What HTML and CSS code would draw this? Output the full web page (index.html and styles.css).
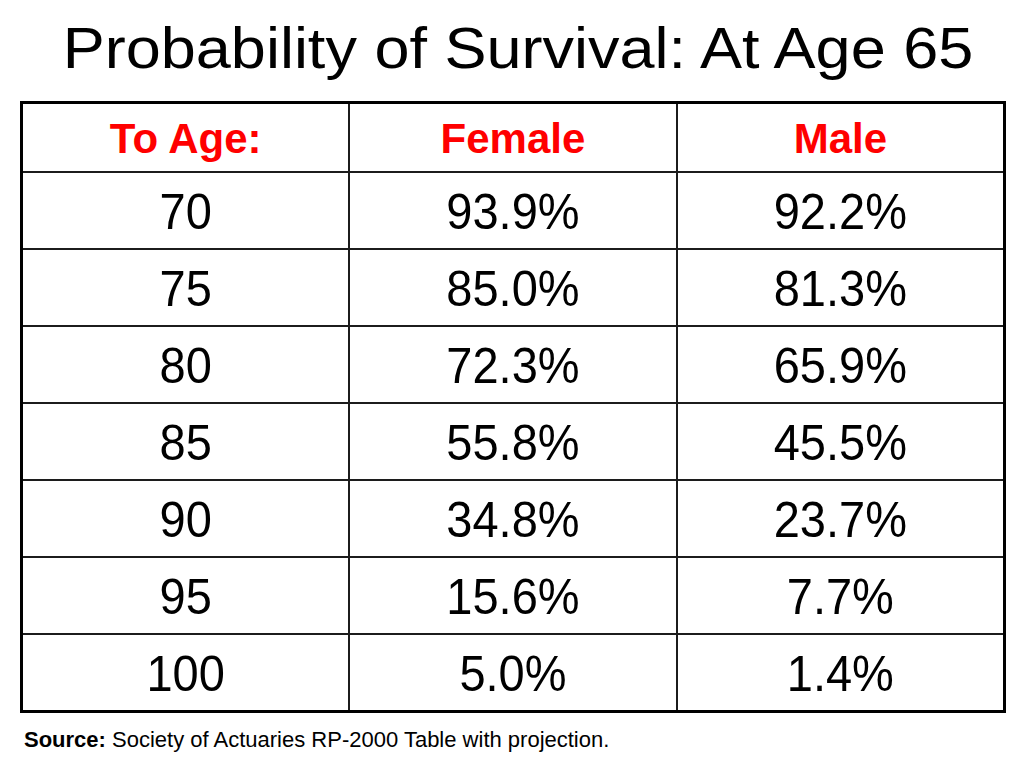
FILE: index.html
```html
<!DOCTYPE html>
<html lang="en">
<head>
<meta charset="utf-8">
<title>Probability of Survival: At Age 65</title>
<link rel="stylesheet" href="styles.css">
</head>
<body>
<main class="slide">
  <h1 class="title">Probability of Survival: At Age 65</h1>
  <div class="table" role="table">
    <div class="cell head" role="columnheader"><span>To Age:</span></div>
    <div class="cell head" role="columnheader"><span>Female</span></div>
    <div class="cell head" role="columnheader"><span>Male</span></div>

    <div class="cell"><span>70</span></div><div class="cell"><span>93.9%</span></div><div class="cell"><span>92.2%</span></div>
    <div class="cell"><span>75</span></div><div class="cell"><span>85.0%</span></div><div class="cell"><span>81.3%</span></div>
    <div class="cell"><span>80</span></div><div class="cell"><span>72.3%</span></div><div class="cell"><span>65.9%</span></div>
    <div class="cell"><span>85</span></div><div class="cell"><span>55.8%</span></div><div class="cell"><span>45.5%</span></div>
    <div class="cell"><span>90</span></div><div class="cell"><span>34.8%</span></div><div class="cell"><span>23.7%</span></div>
    <div class="cell"><span>95</span></div><div class="cell"><span>15.6%</span></div><div class="cell"><span>7.7%</span></div>
    <div class="cell"><span>100</span></div><div class="cell"><span>5.0%</span></div><div class="cell"><span>1.4%</span></div>
  </div>
  <p class="source"><strong>Source:</strong> Society of Actuaries RP-2000 Table with projection.</p>
</main>
</body>
</html>
```
FILE: styles.css
```css
html, body {
  margin: 0;
  padding: 0;
  background: #ffffff;
}

body {
  font-family: "Liberation Sans", Arial, sans-serif;
  color: #000000;
  width: 1024px;
  height: 773px;
  overflow: hidden;
}

.slide {
  display: flex;
  flex-direction: column;
  padding: 0 18px 0 20px;
}

.title {
  margin: 12px 0 0 0;
  font-size: 63px;
  font-weight: normal;
  line-height: 72px;
  text-align: center;
  padding-left: 10px;
  white-space: nowrap;
  transform: scaleY(0.92);
}

.table {
  margin-top: 17px;
  display: grid;
  grid-template-columns: 1fr 1fr 1fr;
  grid-template-rows: 67px repeat(7, 75px);
  gap: 2px;
  background: #1c1c1c;
  border: 3px solid #000000;
}

.cell {
  background: #ffffff;
  display: flex;
  align-items: center;
  justify-content: center;
  font-size: 47px;
  line-height: 1;
  padding-top: 1px;
}

.cell span {
  display: inline-block;
  transform: scaleY(1.08);
}

.cell.head {
  color: #ff0000;
  font-weight: bold;
  font-size: 42px;
  padding-top: 3px;
}

.cell.head span {
  transform: none;
}

.source {
  margin: 15px 0 0 4px;
  font-size: 22px;
  line-height: 24px;
}

.source strong {
  font-weight: bold;
}
```
